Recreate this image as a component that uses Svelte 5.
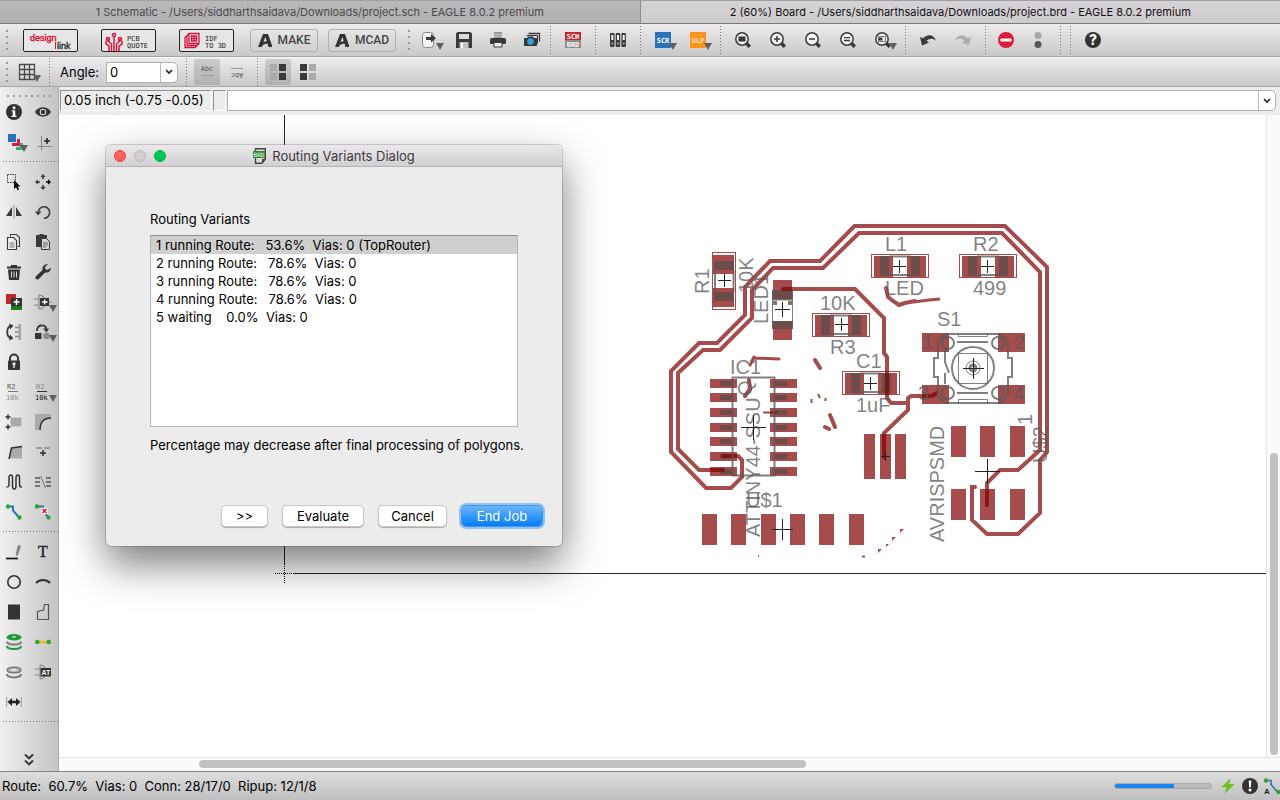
<script>
  const K = '#3a3a3a';
  const G = '#8a8686';
  const lens = `<circle cx="7" cy="7" r="6.200" fill="#f2f2f2" stroke="${K}" stroke-width="1.500"/><path d="M11 11l3.800 3.800" stroke="${K}" stroke-width="3.400"/>`;
  const tag = (t, y, c) => `<text x="8" y="${y}" fill="${c}" font-family="DejaVu Sans Mono" font-weight="700" font-size="7" text-anchor="middle">${t}</text>`;

  const icons = {
    export: `<rect x=".5" y=".5" width="11" height="15" rx="3" fill="#f4f4f4" stroke="${G}"/><path d="M4 5h5V2l5 4.300-5 4.200V8H4z" fill="${K}"/>`,
    save: `<path d="M0 1.500L1.500 0h13L16 1.500V16H0z" fill="${K}"/><path d="M3 2h10v5H3z" fill="#d8d8d8"/><path d="M3.500 10h9v6h-9z" fill="#c4c0c0"/><path d="M5 11h2v5H5z" fill="#fff"/>`,
    print: `<path d="M4 0h8v6H4z" fill="#9a9696"/><path d="M4 2.500h8M4 4.500h8" stroke="#ddd" stroke-width=".7"/><rect y="6" width="16" height="6" rx="1.500" fill="${K}"/><path d="M4 10.500h8V15H4z" fill="#eee" stroke="${K}"/>`,
    camera: `<path d="M4.500 1.500h11v8" fill="none" stroke="${K}" stroke-width="1.300"/><path d="M2.500 3.500h11v8" fill="none" stroke="${K}" stroke-width="1"/><path d="M0 6h3l1-1.500h5L10 6h3v8H0z" fill="${K}"/><circle cx="6.500" cy="9.500" r="3.200" fill="#2ea3e6"/>`,
    schbrd: `<path d="M0 0h16v8H0z" fill="#c1272d"/><path d="M0 8h16v8H0z" fill="#8f8b8b"/>${tag('SCH', 7, '#fff')}${tag('BRD', 15, '#fff')}`,
    library: `<g fill="${K}"><rect y="1" width="4.500" height="14" rx="1"/><rect x="5.700" y="1" width="4.500" height="14" rx="1"/><rect x="11.400" y="1" width="4.500" height="14" rx="1"/></g><g fill="#fff"><path d="M1.300 3h2v5h-2zM7 3h2v5H7zM12.700 3h2v5h-2z"/></g><g fill="#999"><path d="M1.300 10.500h2v2h-2zM7 10.500h2v2H7zM12.700 10.500h2v2h-2z"/></g>`,
    scr: `<path d="M0 0h16v16H0z" fill="#2b73b9"/>${tag('SCR', 10.5, '#fff')}`,
    ulp: `<path d="M0 0h16v16H0z" fill="#f7931e"/>${tag('ULP', 10.5, '#fde3bf')}`,
    zoomfit: lens + `<path d="M3.500 4.500h7v5h-7z" fill="${K}"/>`,
    zoomin: lens + `<path d="M4 7h6M7 4v6" stroke="${K}" stroke-width="1.500"/>`,
    zoomout: lens + `<path d="M4 7h6" stroke="${K}" stroke-width="1.500"/>`,
    redraw: lens + `<path d="M4 5.700h6M4 8.500h6" stroke="${K}" stroke-width="1.300"/>`,
    zoomsel: lens + `<path d="M3.500 4.500h7v5h-7z" fill="none" stroke="#777"/><path d="M3.500 5.500h4v3h-4z" fill="${K}"/>`,
    undo: `<path d="M0 5l2 8.500 7-3-2.500-1.700C9 6.500 12.500 6 15.700 8.500 14.500 3 8 1 3 6.300z" fill="${K}"/>`,
    redo: `<path d="M16 5l-2 8.500-7-3 2.500-1.700C7 6.500 3.500 6 .3 8.500 1.500 3 8 1 13 6.300z" fill="#b0acac"/>`,
    stop: `<circle cx="8" cy="8" r="8" fill="#e01b3c"/><path d="M2.500 6.500h11v3h-11z" fill="#fff"/>`,
    go: `<circle cx="8" cy="3.500" r="3.500" fill="#aaa6a6"/><circle cx="8" cy="12.500" r="3.500" fill="#575757"/>`,
    help: `<circle cx="8" cy="8" r="8" fill="#333"/><text x="8" y="13" fill="#fff" font-family="Inter" font-weight="800" font-size="14" text-anchor="middle">?</text>`,
    grid: `<path d="M.5 .5h15v15H.5zM.5 5.500h15M.5 10.500h15M5.500 .5v15M10.500 .5v15" fill="none" stroke="#4a4a4a" stroke-width="1.300"/>`,
    abc: `<text x="8" y="7" fill="#555" font-family="DejaVu Sans Mono" font-size="7" text-anchor="middle">Abc</text><path d="M2 11.500h12" stroke="#999"/>`,
    abcflip: `<path d="M2 4.500h12" stroke="#999"/><text x="8" y="7" fill="#555" font-family="DejaVu Sans Mono" font-size="7" text-anchor="middle" transform="rotate(180 8 8)">Abc</text>`,
    blocksr: `<path d="M0 0h7v7H0zM0 9h7v7H0z" fill="#aea9a9"/><path d="M9 0h7v7H9zM9 9h7v7H9z" fill="${K}"/>`,
    blocksl: `<path d="M0 0h7v7H0zM0 9h7v7H0z" fill="${K}"/><path d="M9 0h7v7H9zM9 9h7v7H9z" fill="#aea9a9"/>`,
    info: `<circle cx="8" cy="8" r="8" fill="#333"/><circle cx="8" cy="3.700" r="1.500" fill="#fff"/><path d="M5.800 6.200h3.500v5.500h1.200V13h-5v-1.300h1.200V7.500h-.9z" fill="#fff"/>`,
    eye: `<path d="M0 8C3.500 1.800 12.500 1.800 16 8 12.500 14.200 3.500 14.200 0 8z" fill="#333"/><circle cx="8" cy="8" r="3.300" fill="#ddd"/><circle cx="8" cy="8" r="2.200" fill="#333"/>`,
    layers: `<path d="M17 9v7h-7v-3h4V9z" fill="#35b068"/><path d="M14 5v7H6V9h5V5z" fill="#d6175a"/><path d="M2 0h8v8H2z" fill="#2b73b9"/>`,
    mark: `<path d="M6.500 2v14M3 12.500h14" stroke="${G}" stroke-width="1.100"/><path d="M9 7h6M12 4v6" stroke="#222" stroke-width="1.500"/>`,
    group: `<path d="M1.500 .5h8v8h-8z" fill="none" stroke="#333" stroke-dasharray="1.500 1"/><path d="M8 6l6.500 6.500-2.900.1 1.500 3-1.500.7-1.500-3L8 15z" fill="#000"/>`,
    move: `<g fill="${K}"><path d="M8 0l2.500 3h-1.700v2H7.200V3H5.500zM8 16l2.500-3h-1.700v-2H7.200v2H5.500zM0 8l3-2.500v1.700h2v1.600H3v1.700z"/><path fill="#000" d="M16 8l-3-2.700v1.900h-2v1.600h2v1.900z"/></g>`,
    mirror: `<path d="M6 3v9H0zM10 3v9h6z" fill="${K}"/><path d="M8 1v14" stroke="#aaa" stroke-width="1.400"/>`,
    rotate: `<path d="M3.300 8A5.700 5.700 0 1 1 9 14.200" fill="none" stroke="${K}" stroke-width="1.600"/><path d="M0 7.500h6.500L3 11.500z" fill="${K}"/>`,
    copy: `<path d="M4.500 2.500V.5h6l3 3v9h-2" fill="none" stroke="${K}" stroke-width="1.100"/><path d="M1.500 3.500h6l3 3v9h-9z" fill="#eee" stroke="${K}" stroke-width="1.100"/><path d="M3.500 9h5M3.500 11h5M3.500 13h5" stroke="#777"/>`,
    paste: `<path d="M1 1h3l1-1h3l1 1h3v12H1z" fill="${K}"/><path d="M6.500 4.500h5l3 3v8h-8z" fill="#d4d4d4" stroke="${K}"/><path d="M8 9h5M8 11h5M8 13h3" stroke="#666"/>`,
    trash: `<path d="M1 2.500h4V1h6v1.500h4v2H1zM2 5.500h12L13 16H3z" fill="#333"/><path d="M5.500 7.500v6M8 7.500v6M10.500 7.500v6" stroke="#ddd"/>`,
    wrench: `<path d="M15.700 3.500l-3 2.500-2.200-.7-.5-2.300L13 .3C10 0 7 2 7.500 6L.8 12.500C-.5 14.500 1.800 16.500 3.500 15.200L10 8.500c4 .5 6-2 5.700-5z" fill="#333"/>`,
    add: `<path d="M0 0h10v10H0z" fill="#c1272d"/><path d="M5 11h11v5H5z" fill="#1d7a1d"/><path d="M5 4h11v8H5z" fill="#333"/><path d="M7.500 8h6M10.500 5v6" stroke="#fff" stroke-width="1.500"/>`,
    gate: `<path d="M-1 5h5M-1 11h5M4 1v14M4 1c8 0 9 14 0 14M12 8h4" fill="none" stroke="${G}" stroke-width="1.200"/><path d="M5 4h9v8H5z" fill="#333"/><path d="M7 8h5.500M9.700 5.500v5" stroke="#fff" stroke-width="1.400"/>`,
    pinswap: `<path d="M5 2C0 3 0 13 5 14" fill="none" stroke="${K}" stroke-width="1.800"/><path d="M3-.5L7.500 1.500 4 5.500zM3 16.500L7.500 14.500 4 10.500z" fill="${K}"/><path d="M9 3.500h4M9 8h4M9 12.500h4" stroke="#888" stroke-width="1.300"/><path d="M12.500 0H15v16h-2.500z" fill="#a9a5a5"/>`,
    replace: `<path d="M2 7C2 0 10 0 11.500 5" fill="none" stroke="${K}" stroke-width="1.800"/><path d="M8 4.500h6l-2.500 4z" fill="${K}"/><path d="M0 9h6.500v6H0z" fill="#333"/><circle cx="11.500" cy="12" r="3.300" fill="#8f8b8b"/>`,
    lock: `<path d="M4 7V4.500a4 4 0 0 1 8 0V7" fill="none" stroke="#333" stroke-width="2"/><rect x="2" y="6.500" width="12" height="9.500" rx="1" fill="#333"/><path d="M6.500 8.500h3v2.500H8.800v3H7.200v-3h-.7z" fill="#ddd"/>`,
    name: `<text x="1" y="5" fill="#555" font-family="DejaVu Sans Mono" font-size="7">R2</text><path d="M2 7.500h10" stroke="#777"/><text x="0" y="16" fill="#888" font-family="DejaVu Sans Mono" font-size="7">10k</text>`,
    value: `<text x="1" y="5" fill="#888" font-family="DejaVu Sans Mono" font-size="7">R2</text><path d="M2 7.500h10" stroke="#333"/><text x="0" y="16" fill="#111" font-family="DejaVu Sans Mono" font-size="7">10k</text>`,
    smash: `<path d="M5 4h10v8H5z" fill="#aea9a9" stroke="#999" stroke-dasharray="1 1"/><path d="M-.5 3h5M2 .5v5M-.5 13h5M2 10.500v5" stroke="#333" stroke-width="1.500"/>`,
    miter: `<path d="M0 0h16v4C9 4 5 8 5 16H0z" fill="#aea9a9"/><path d="M5 16C5 8 8 4 16 4" fill="none" stroke="#333" stroke-width="1.500"/>`,
    split: `<path d="M3 14.500L5.500 4 16 2.500v12z" fill="#aea9a9"/><path d="M3 15L5.500 4 16 2.500" fill="none" stroke="#333" stroke-width="1.500"/>`,
    optimize: `<path d="M1 4h6M9 4h6" stroke="#888" stroke-width="1.300"/><path d="M5 9h6M8 6v6" stroke="#333" stroke-width="1.500"/>`,
    meander: `<path d="M.5 13C3 13 3 12 3 8.500V4C3 0 6.500 0 6.500 4v8c0 4 3.500 4 3.500 0V4c0-4 3.500-4 3.500 0v5c0 3 0 4 2.500 4" fill="none" stroke="#333" stroke-width="1.500"/>`,
    ratsnest: `<path d="M0 4h5M0 8h5M0 12h5M11 4h5M11 8h5M11 12h5" stroke="#555" stroke-width="1.600"/><path d="M5.500 2l5 12" stroke="#777"/>`,
    route: `<path d="M2 2.500h5v4l6 7" fill="none" stroke="#2b73b9" stroke-width="2"/><circle cx="2" cy="2.500" r="2.200" fill="#35a135"/><circle cx="13.500" cy="13.500" r="2.200" fill="#35a135"/>`,
    ripup: `<path d="M2 2.500h7M11 10l2 3.500" fill="none" stroke="#2b73b9" stroke-width="2"/><circle cx="2" cy="2.500" r="2.200" fill="#35a135"/><circle cx="13.500" cy="13.500" r="2.200" fill="#35a135"/><path d="M6.500 4h6v6h-6z" fill="#fff"/><path d="M7.500 5l4 4M11.500 5l-4 4" stroke="#e01b3c" stroke-width="1.700"/>`,
    line: `<path d="M0 14.500h12" stroke="#111" stroke-width="1.700"/><path d="M12 1l3 .8-2.800 9-1.700 1.400-.8-2.200z" fill="#8a8686"/>`,
    text: `<text x="8" y="13" fill="#222" font-family="Liberation Serif" font-size="16" stroke="#222" stroke-width=".4" text-anchor="middle">T</text>`,
    circle: `<circle cx="8" cy="8" r="6.200" fill="none" stroke="#333" stroke-width="1.600"/>`,
    arc: `<path d="M1 9C5 5 11 5 15 9" fill="none" stroke="#333" stroke-width="1.900"/>`,
    rect: `<path d="M2 .5h12v15H2z" fill="#333"/>`,
    polygon: `<path d="M2.500 15.500v-8l6-1.500 1-5.500h4v15z" fill="none" stroke="#555" stroke-width="1.200"/>`,
    vias: `<path d="M1 12c0 4 14 4 14 0" fill="none" stroke="#1c9a3c" stroke-width="2.200"/><path d="M1 7.500c0 4 14 4 14 0" fill="none" stroke="#8a8686" stroke-width="2.400"/><ellipse cx="8" cy="3.200" rx="7.500" ry="3.200" fill="#1c9a3c"/><ellipse cx="8" cy="3" rx="2" ry=".9" fill="#b6dfbd"/>`,
    signal: `<path d="M3 8h10" stroke="#f2b705" stroke-width="2.200"/><circle cx="2.300" cy="8" r="2.300" fill="#35a135"/><circle cx="13.700" cy="8" r="2.300" fill="#35a135"/>`,
    hole: `<path d="M1 10c0 4.500 14 4.500 14 0" fill="none" stroke="#7a7676" stroke-width="2"/><ellipse cx="8" cy="6" rx="6.700" ry="2.700" fill="#bbb" stroke="#7a7676" stroke-width="1.600"/><ellipse cx="8" cy="6" rx="3" ry="1" fill="#e4e4e4"/>`,
    attribute: `<path d="M0 5h5M0 11h5M5 1v14M5 1c8 0 8 14 0 14" fill="none" stroke="${G}" stroke-width="1.100"/><path d="M5.500 4H16v8.500H5.500z" fill="#333"/><text x="10.800" y="11" fill="#fff" font-family="Liberation Sans" font-weight="700" font-size="7" text-anchor="middle">AT</text>`,
    dimension: `<path d="M.7 3v10M15.300 3v10" stroke="#999"/><path d="M1.500 8L6 4v2.800h4V4l4.500 4-4.500 4V9.200H6V12z" fill="#222"/>`,
    more: `<path d="M4 2.500l4 4 4-4M4 8.500l4 4 4-4" fill="none" stroke="#333" stroke-width="1.800"/>`,
    chevron: `<path d="M5 6l3 3 3-3" fill="none" stroke="#222" stroke-width="1.700"/>`,
    bolt: `<path d="M10.500 0L1.500 9.300h5L4.500 16 14.500 6H9.200z" fill="#6cc11c"/>`,
    alert: `<circle cx="8" cy="8" r="8" fill="#333"/><path d="M6.700 2.500h2.600L8.800 9.500H7.200z" fill="#fff"/><circle cx="8" cy="12" r="1.500" fill="#fff"/>`,
    autoroute: `<path d="M2 2.500h5v4l6 7" fill="none" stroke="#2b73b9" stroke-width="1.600"/><circle cx="2" cy="2.500" r="2.200" fill="#35a135"/><circle cx="14.500" cy="14" r="2.200" fill="#35a135"/><text x="0" y="16" fill="#222" font-family="Liberation Sans" font-weight="700" font-size="8">A</text>`
  };

  const fileTools = [['export', 1], ['save'], ['print'], ['camera']];
  const toolGroups = [
    [['schbrd']],
    [['library']],
    [['scr', 1], ['ulp', 1]],
    [['zoomfit'], ['zoomin'], ['zoomout'], ['redraw'], ['zoomsel', 1]],
    [['undo'], ['redo']]
  ];
  const palette = [
    [['info'], ['eye'], ['layers', 1], ['mark']],
    [['group'], ['move'], ['mirror'], ['rotate'], ['copy'], ['paste'], ['trash'], ['wrench'], ['add'], ['gate', 1],
      ['pinswap'], ['replace', 1], ['lock'], null, ['name'], ['value', 1], ['smash'], ['miter'], ['split'], ['optimize'],
      ['meander'], ['ratsnest'], ['route'], ['ripup']],
    [['line'], ['text'], ['circle'], ['arc'], ['rect'], ['polygon'], ['vias'], ['signal'], ['hole'], ['attribute'], ['dimension'], null]
  ];

  const variants = [
    '1 running Route:   53.6%  Vias: 0 (TopRouter)',
    '2 running Route:   78.6%  Vias: 0',
    '3 running Route:   78.6%  Vias: 0',
    '4 running Route:   78.6%  Vias: 0',
    '5 waiting    0.0%  Vias: 0'
  ];
  let selected = $state(0);
  let angle = $state('0');
  let command = $state('');
  const progress = 61;

  const chips = [
    'translate(900 266)', 'translate(988 266)', 'translate(841 325)', 'translate(871 383)', 'translate(724 281) rotate(90)'
  ];
  const icRows = [379, 393, 408, 423, 437, 452, 467];
  const headerX = [702, 731, 761, 790, 819, 849];
  const ispX = [951, 980, 1010];
  const resX = [864, 880, 895];
  const switchPads = [[922, 333], [998, 333], [922, 385], [998, 385]];
  const labels = [
    ['L1', 885, 251], ['R2', 973, 251], ['LED', 885, 295], ['499', 973, 295], ['S1', 937, 326],
    ['10K', 820, 310], ['R3', 830, 354], ['C1', 856, 368], ['1uF', 856, 412], ['IC1', 730, 374], ['U$1', 746, 507],
    ['1', 922, 349], ['2', 1014, 349], ['3', 918, 400], ['4', 1013, 400],
    ['R1', 709, 294, 1], ['10K', 753, 293, 1], ['LED1', 768, 324, 1], ['ATTINY44-SSU', 760, 537, 1],
    ['Q', 752, 396, 1], ['AVRISPSMD', 944, 542, 1], ['U$2', 1047, 463, 1], ['1', 1032, 425, 1]
  ];
  const crosses = [[899, 266, 6], [987, 266, 6], [841, 324, 6], [870, 383, 6], [724, 280, 6], [782, 309, 7], [753, 427, 12], [782, 529, 10], [987, 471, 12], [885, 456, 4], [973, 368, 10]];
</script>

{#snippet glyph(name, drop)}
  <svg class="glyph" viewBox="0 0 16 16" aria-hidden="true">
    {@html icons[name]}
    {#if drop}<path d="M14 11h8l-4 7z" fill="#5f5f5f" />{/if}
  </svg>
{/snippet}

{#snippet tool(item)}
  <button class="tool" aria-label={item[0]}>{@render glyph(item[0], item[1])}</button>
{/snippet}

<div class="window">
  <nav class="tabs">
    <button class="tab">1 Schematic - /Users/siddharthsaidava/Downloads/project.sch - EAGLE 8.0.2 premium</button>
    <button class="tab current">2 (60%) Board - /Users/siddharthsaidava/Downloads/project.brd - EAGLE 8.0.2 premium</button>
  </nav>

  <div class="bar actions">
    <span class="grip"></span>
    <div class="partners">
      <button class="badge" aria-label="design link">
        <svg viewBox="0 0 53 21" font-family="Liberation Sans">
          <text x="6" y="11" font-size="9" fill="#d6123c" stroke="#d6123c" stroke-width=".4">design</text>
          <text x="33" y="19" font-size="9" fill="#222" stroke="#222" stroke-width=".3">link</text>
          <path d="M31.500 12v7" stroke="#d6123c" />
        </svg>
      </button>
      <button class="badge" aria-label="PCB quote">
        <svg viewBox="0 0 53 21" font-family="DejaVu Sans Mono">
          <g fill="none" stroke="#d6123c" stroke-width="1.500">
            <path d="M12 21V6M9.500 21v-7L6 11V9M14.500 21v-7l3.500-3V9M7 21v-5l-3-2v-3M17 21v-5l3-2v-3" />
            <circle cx="12" cy="5" r="1.600" /><circle cx="6" cy="9" r="1.600" /><circle cx="18" cy="9" r="1.600" />
          </g>
          <text x="25" y="11" font-size="7" fill="#222">PCB</text>
          <text x="25" y="18" font-size="7" fill="#222">QUOTE</text>
        </svg>
      </button>
      <button class="badge" aria-label="IDF to 3D">
        <svg viewBox="0 0 53 21" font-family="DejaVu Sans Mono">
          <g fill="none" stroke="#d6123c" stroke-width="1.300">
            <path d="M9 3.500h10v10H9zM9 3.500l-4 4v10h10l4-4M7 5.500v10h10" />
            <path d="M11.500 6h5v5h-5zM14 6v5M11.500 8.500h5" />
          </g>
          <text x="25" y="11" font-size="7" fill="#222">IDF</text>
          <text x="25" y="18" font-size="7" fill="#222">TO 3D</text>
        </svg>
      </button>
    </div>
    <div class="autodesk">
      {#each ['MAKE', 'MCAD'] as label}
        <button class="maker">
          <svg viewBox="0 0 14 13" aria-hidden="true"><path d="M0 13L5 0h5l4 11.500V13h-3.500L9.500 9.500 5.500 10.500 3.500 13zM7.300 3L5.500 8l3.300-1z" fill="#333" /></svg>
          {label}
        </button>
      {/each}
    </div>
    <span class="grip second"></span>
    <div class="group files">{#each fileTools as t}{@render tool(t)}{/each}</div>
    {#each toolGroups as g}
      <span class="rule"></span>
      <div class="group">{#each g as t}{@render tool(t)}{/each}</div>
    {/each}
    <span class="rule"></span>
    <div class="group run">{@render tool(['stop'])}{@render tool(['go'])}</div>
    <span class="rule"></span>
    <span class="rule after"></span>
    <div class="group">{@render tool(['help'])}</div>
  </div>

  <div class="bar params">
    <span class="grip"></span>
    <div class="gridtool">{@render tool(['grid', 1])}</div>
    <span class="rule"></span>
    <label for="angle">Angle:</label>
    <div class="combo angle">
      <input id="angle" type="text" bind:value={angle} />
      <button aria-label="Angle values">{@render glyph('chevron')}</button>
    </div>
    <span class="rule"></span>
    <div class="toggles">
      <button class="toggle on" aria-label="Normal text">{@render glyph('abc')}</button>
      <button class="toggle" aria-label="Mirrored text">{@render glyph('abcflip')}</button>
    </div>
    <span class="rule"></span>
    <div class="toggles">
      <button class="toggle on" aria-label="Align right">{@render glyph('blocksr')}</button>
      <button class="toggle" aria-label="Align left">{@render glyph('blocksl')}</button>
    </div>
  </div>

  <div class="work">
    <aside class="palette">
      <span class="dots"></span>
      {#each palette as section}
        <div class="tools">
          {#each section as t}
            {#if t}{@render tool(t)}{:else}<span></span>{/if}
          {/each}
        </div>
        <span class="divider"></span>
      {/each}
      <button class="tool more" aria-label="More">{@render glyph('more')}</button>
    </aside>

    <main>
      <div class="entry">
        <output class="coords">0.05 inch (-0.75 -0.05)</output>
        <span class="cell"></span>
        <div class="combo command">
          <input type="text" aria-label="Command" bind:value={command} />
          <button aria-label="Command history">{@render glyph('chevron')}</button>
        </div>
      </div>

      <div class="canvas">
        <div class="view">
          <svg class="board" role="img" aria-label="Board layout">
            <g transform="translate(-59 -115)">
              <g fill="none" stroke="#2b2b2b">
                <path d="M284.500 115V564M294 573.500H4000" />
                <path d="M284.500 564v19M275 573.500h19" stroke="#000" stroke-dasharray="1 1" />
              </g>

              <g class="copper">
                {#each icRows as y}
                  <rect x="710" {y} width="27" height="9" /><rect x="770" {y} width="27" height="9" />
                {/each}
                {#each headerX as x}<rect {x} y="514" width="15" height="31" />{/each}
                {#each ispX as x}
                  <rect {x} y="426" width="15" height="31" /><rect {x} y="489" width="15" height="31" />
                {/each}
                {#each resX as x}<rect {x} y="434" width="11" height="45" />{/each}
                {#each switchPads as [x, y]}<rect {x} {y} width="27" height="19" />{/each}
                <rect x="773" y="280" width="19" height="19" /><rect x="773" y="321" width="19" height="19" />
              </g>

              {#each chips as t}
                <g transform={t}>
                  <g class="copper"><rect x="-26" y="-10" width="19" height="21" /><rect x="7" y="-10" width="19" height="21" /></g>
                  <rect x="-28.500" y="-11.500" width="57" height="23" fill="none" stroke="#a54b4b" />
                  <g class="body"><rect x="-20" y="-10" width="9" height="20" /><rect x="11" y="-10" width="9" height="20" /></g>
                  <path class="silk" d="M-11-9.500h22M-11 9h22" />
                </g>
              {/each}

              <g class="body">
                {#each icRows as y}
                  <rect x="720" y={y + 2} width="13" height="5" /><rect x="774" y={y + 2} width="13" height="5" />
                {/each}
                <rect x="772" y="290" width="21" height="10" /><rect x="772" y="321" width="21" height="8" />
                <rect x="773" y="301" width="4" height="4" /><rect x="788" y="301" width="4" height="4" />
              </g>

              <g class="traces">
                <path d="M723 456h15l4 4v17l-11 11h-25l-35-36V371l28-28h18l28-28v-28l25-26h50l34.500-35H1005l42 41v185l-7 8v53l-22 21h-31l-15-14v-33h3" />
                <path d="M723 470h-24l-21-21v-76l25-23h17l32-32v-28l21-22h50l36-35h143l38 39v178l-22 20h-18l-13 13v22" />
                <path d="M783 289h72l29 29v35l3 4v41l4 5h17M937 393l-5 3h-21l-3 2v12l-24 23v24" />
                <path d="M886 288l2 9 5 4 6 4 6-2 10-2" />
                <path d="M913 302l16-2 11-1" stroke-width="3" stroke-linecap="butt" />
                <path d="M754 358l25 1M754 357l-4 8" stroke-width="3" />
                <path d="M749 380l1 9-5 7M815 360l5 8M830 415l5 12M825 427l4 2" />
                <path d="M763 412.500h14M811.500 399v4M818 394l2 4M825.500 398v3M758 556h1M862 556.500h3" stroke-width="2" stroke-linecap="butt" />
                <path d="M878 549h4l-4 4zM886 544h3l-3 3zM892 537h4l-4 4zM900 529h4l-4 4z" stroke="none" fill="#800000" />
              </g>

              <g class="silk">
                <rect x="732.500" y="377.500" width="42" height="98" />
                <path d="M772.500 290v39M792.500 290v39M773 300h19" stroke-width="1" />
                <path d="M945 334h56l7 7v17h4v19h-4v19l-7 7h-56l-7-7v-19h-4v-19h4v-17z" />
                <circle cx="948" cy="343" r="6" /><circle cx="998" cy="343" r="6" />
                <circle cx="948" cy="393" r="6" /><circle cx="998" cy="393" r="6" />
                <circle cx="973" cy="368" r="21" />
                <path d="M957 342h31M957 393h31M945 349v13l4 11M945 373v11" />
                <path d="M958.500 353.500h29v30h-29zM958.500 334v2.500h29V334M958.500 403v-3.500h29v3.500" stroke-width="1" />
                <circle cx="973" cy="368" r="7" stroke-width="1" /><circle cx="973" cy="368" r="3" stroke-width="3" />
              </g>

              <g class="names">
                {#each labels as [t, x, y, r]}
                  <text transform={`translate(${x} ${y})${r ? ' rotate(-90)' : ''}`}>{t}</text>
                {/each}
              </g>

              {#each crosses as [x, y, s]}
                <path d={`M${x - s} ${y + 0.5}h${2 * s + 1}M${x + 0.5} ${y - s}v${2 * s + 1}`} stroke="#222" />
              {/each}
            </g>
          </svg>

          <section class="dialog" role="dialog" aria-labelledby="dialog-title">
            <header>
              <div class="lights">
                <button class="close" aria-label="Close"></button>
                <button class="mini" aria-label="Minimise" disabled></button>
                <button class="full" aria-label="Zoom"></button>
              </div>
              <h1 id="dialog-title">
                <svg viewBox="0 0 14 16" aria-hidden="true">
                  <path d="M2.500.7h9.800v10.600l-3.500 4H2.500z" fill="#ddd" stroke="#444" stroke-width="1.400" />
                  <path d="M13 11H9v4.500z" fill="#444" />
                  <path d="M0 3h12v7H0z" fill="#2e8b35" />
                  <text x="6" y="9" fill="#fff" font-family="DejaVu Sans Mono" font-size="6" text-anchor="middle">BRD</text>
                </svg>
                Routing Variants Dialog
              </h1>
            </header>
            <div class="content">
              <h2 id="variants">Routing Variants</h2>
              <ul role="listbox" aria-labelledby="variants">
                {#each variants as v, i}
                  <li role="option" aria-selected={selected === i}>
                    <button class:selected={selected === i} onclick={() => (selected = i)}>{v}</button>
                  </li>
                {/each}
              </ul>
              <p>Percentage may decrease after final processing of polygons.</p>
            </div>
            <footer>
              <button class="push small">&gt;&gt;</button>
              <button class="push wide">Evaluate</button>
              <button class="push">Cancel</button>
              <button class="push wide primary">End Job</button>
            </footer>
          </section>
        </div>
        <div class="vscroll"><span></span></div>
        <div class="hscroll"><span></span></div>
      </div>
    </main>
  </div>

  <footer class="status">
    <span class="route">Route:  60.7%  Vias: 0  Conn: 28/17/0  Ripup: 12/1/8</span>
    <div class="meter" role="progressbar" aria-label="Routing" aria-valuenow={progress}><span style:width={`${progress}%`}></span></div>
    {@render glyph('bolt')}
    {@render glyph('alert')}
    {@render glyph('autoroute')}
  </footer>
</div>

<style>
  :global(body) { margin: 0; }
  * { box-sizing: border-box; }
  button, input { font: inherit; color: inherit; margin: 0; padding: 0; border: 0; background: none; }
  h1, h2, p, ul { margin: 0; padding: 0; font-size: 13px; font-weight: 400; list-style: none; }

  .window {
    display: flex;
    flex-direction: column;
    height: 100vh;
    overflow: hidden;
    background: #ececec;
    color: #000;
    font: 13px/18px Inter, sans-serif;
  }
  .glyph { display: block; flex: none; width: 16px; height: 16px; overflow: visible; }

  .tabs { display: flex; flex: none; height: 24px; border-top: 1px solid #a19ea1; border-bottom: 1px solid #7c7a7c; }
  .tab {
    flex: 1 1 0;
    min-width: 0;
    overflow: hidden;
    white-space: nowrap;
    font-size: 11px;
    color: #4b494b;
    background: linear-gradient(#bab7ba, #b2afb2);
  }
  .tab.current { color: #111; background: linear-gradient(#d6d3d7, #cecbcf); border-left: 1px solid #8f8c8f; }

  .bar { display: flex; flex: none; align-items: center; background: linear-gradient(#ececec, #c9c9c9); border-bottom: 1px solid #a6a6a6; }
  .actions { height: 33px; }
  .params { height: 30px; border-top: 1px solid #f6f6f6; }
  .grip { flex: none; width: 2px; height: 20px; margin-left: 6px; background: repeating-linear-gradient(#999 0 2px, transparent 2px 6px); }
  .grip.second { margin-left: 12px; }
  .rule { flex: none; width: 1px; height: 28px; background: repeating-linear-gradient(#777 0 1px, transparent 1px 3px); }
  .rule.after { margin-left: 9px; }
  .partners { display: flex; gap: 23px; margin-left: 15px; }
  .badge { display: block; width: 55px; height: 23px; border: 1px solid #222; border-radius: 2px; background: #e6e6e6; }
  .badge svg { display: block; width: 53px; height: 21px; }
  .autodesk { display: flex; gap: 10px; margin-left: 16px; }
  .maker {
    display: flex;
    align-items: center;
    justify-content: center;
    gap: 6px;
    width: 68px;
    height: 23px;
    border: 1px solid #b0b0b0;
    border-radius: 3px;
    font: 500 12px/20px Roboto, sans-serif;
    color: #444;
  }
  .maker svg { width: 14px; height: 13px; }
  .group { display: flex; gap: 19px; padding: 0 14px; }
  .files { gap: 18px; padding: 0 10px 0 12px; }
  .run { gap: 16px; padding-left: 12px; }
  .tool { display: grid; place-items: center; }

  .gridtool { padding: 0 14px 0 11px; }
  .params label { margin: 0 7px 0 10px; }
  .combo { display: flex; border: 1px solid #b0b0b0; border-radius: 0 5px 5px 0; background: #fff; height: 21px; }
  .combo input { flex: 1; min-width: 0; padding: 0 3px; outline: 0; }
  .combo button { width: 17px; border-left: 1px solid #bbb; display: grid; place-items: center; }
  .combo.angle { width: 72px; margin-right: 8px; }
  .toggles { display: flex; gap: 4px; padding: 0 7px; }
  .toggle { display: grid; place-items: center; width: 26px; height: 26px; border-radius: 3px; }
  .toggle.on { background: rgba(0, 0, 0, 0.13); }

  .work { display: flex; flex: 1; min-height: 0; }
  .palette {
    display: flex;
    flex: none;
    flex-direction: column;
    width: 59px;
    background: linear-gradient(90deg, #f0f0f0, #c4c4c4);
    border-right: 1px solid #aaa;
  }
  .dots { height: 2px; margin: 8px 6px 0 7px; background: repeating-linear-gradient(90deg, #999 0 2px, transparent 2px 6px); }
  .tools { display: grid; grid-template-columns: 28px 30px; grid-auto-rows: 30px; }
  .divider { height: 1px; margin: 4px 0 5px 3px; background: repeating-linear-gradient(90deg, #777 0 1px, transparent 1px 3px); }
  .more { margin-top: auto; height: 22px; }

  main { display: flex; flex: 1; flex-direction: column; min-width: 0; }
  .entry { display: flex; flex: none; height: 28px; padding: 3px 4px 4px 1px; gap: 1px; }
  .coords { width: 152px; padding: 0 3px; white-space: nowrap; border: 1px solid #fff; border-top-color: #909090; border-left-color: #909090; }
  .cell { width: 13px; border: 1px solid #fff; border-top-color: #909090; border-left-color: #909090; }
  .combo.command { flex: 1; }
  .canvas { display: grid; flex: 1; min-height: 0; grid-template: minmax(0, 1fr) 14px / minmax(0, 1fr) 14px; }
  .view { position: relative; overflow: hidden; background: #fff; }
  .board { display: block; width: 100%; height: 100%; }
  .copper { fill: rgba(128, 0, 0, 0.7); }
  .traces { opacity: 0.7; fill: none; stroke: #800000; stroke-width: 4; stroke-linecap: round; }
  .body { fill: rgba(90, 78, 76, 0.77); }
  .silk { fill: none; stroke: rgba(90, 90, 90, 0.77); stroke-width: 2; }
  .names { fill: rgba(90, 90, 90, 0.77); font: 20px "Liberation Sans", sans-serif; }
  .vscroll { display: flex; justify-content: center; background: #fafafa; border-left: 1px solid #e6e6e6; }
  .vscroll span { width: 8px; height: 47%; margin-bottom: 2px; border-radius: 4px; background: #c1c1c1; align-self: flex-end; }
  .hscroll { grid-column: 1 / -1; padding: 2px 14px 0 0; background: #fafafa; border-top: 1px solid #e6e6e6; }
  .hscroll span { display: block; width: 50.3%; height: 8px; margin-left: 11.6%; border-radius: 4px; background: #c1c1c1; }

  .dialog {
    position: absolute;
    left: 47px;
    top: 30px;
    width: 456px;
    border-radius: 5px;
    background: #ececec;
    box-shadow: 0 0 0 1px rgba(0, 0, 0, 0.16), 0 18px 40px rgba(0, 0, 0, 0.52);
  }
  .dialog header {
    display: grid;
    grid-template-columns: 1fr auto 1fr;
    align-items: center;
    height: 22px;
    padding: 0 8px;
    border-bottom: 1px solid #b4b1b4;
    border-radius: 5px 5px 0 0;
    background: linear-gradient(#ebe8eb, #d3d0d4);
  }
  .lights { display: flex; gap: 8px; }
  .lights button { width: 12px; height: 12px; border-radius: 50%; border: 1px solid #e2463f; background: #ff5f57; }
  .lights .mini { border-color: #bcbabc; background: #d0ced0; }
  .lights .full { border-color: #00b04b; background: #00c953; }
  .dialog h1 { display: flex; align-items: center; gap: 5px; color: #3c3a3c; }
  .dialog h1 svg { width: 14px; height: 16px; }
  .content { padding: 43px 44px 0; }
  .content h2 { margin-bottom: 7px; }
  ul { height: 192px; border: 1px solid #b5b5b5; border-top-color: #8c8c8c; background: #fff; }
  li button { display: block; width: 100%; height: 18px; padding: 0 5px; text-align: left; white-space: pre; }
  li button.selected { background: #cfcfcf; }
  .content p { margin-top: 9px; white-space: nowrap; }
  .dialog footer { display: flex; justify-content: flex-end; gap: 16px; padding: 52px 20px 20px; }
  .push { width: 67px; height: 20px; border-radius: 4px; background: #fff; box-shadow: 0 0 0 1px #c8c8c8, 0 1px 1px 1px #aaa; }
  .push.small { width: 45px; }
  .push.wide { width: 80px; }
  .push.primary { color: #fff; background: linear-gradient(#6bb5f8, #067df8); box-shadow: 0 0 0 1px #3f98ee, 0 0 0 3px #93c3f0; }

  .status {
    display: flex;
    flex: none;
    align-items: center;
    gap: 6px;
    height: 29px;
    padding-left: 2px;
    border-top: 1px solid #858585;
    background: linear-gradient(#dedede, #bfbfbf);
    overflow: hidden;
  }
  .route { flex: 1; white-space: pre; }
  .meter { width: 98px; height: 6px; margin-right: 2px; border: 1px solid #aaa; border-radius: 3px; background: #bbb; overflow: hidden; }
  .meter span { display: block; height: 100%; background: #1a86f0; }
</style>
